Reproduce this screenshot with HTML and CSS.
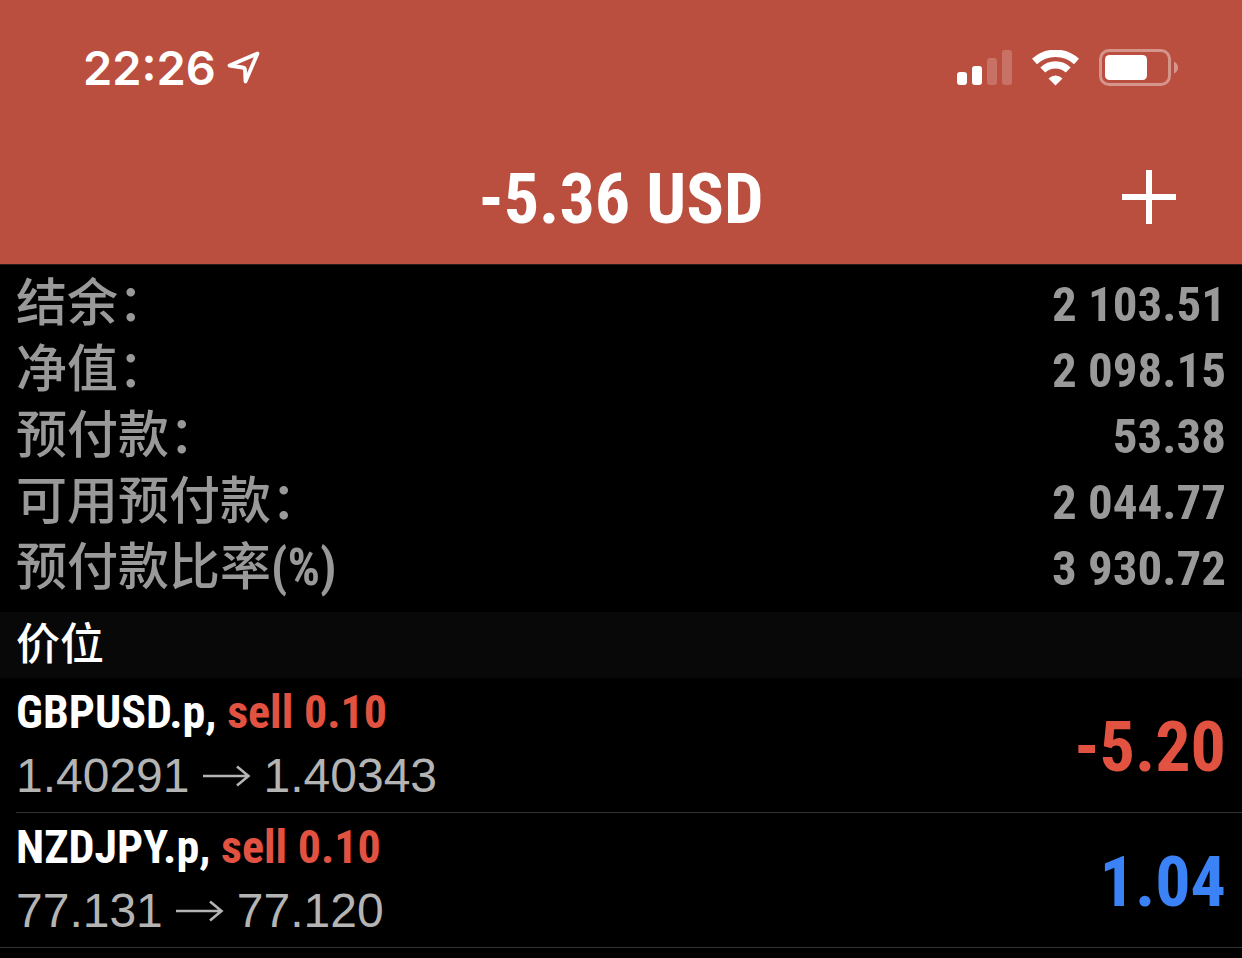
FILE: index.html
```html
<!DOCTYPE html>
<html lang="zh-CN">
<head>
<meta charset="utf-8">
<meta name="viewport" content="width=device-width, initial-scale=1">
<title>-5.36 USD</title>
<link rel="stylesheet" href="styles.css">
</head>
<body>
<header class="top">
  <div class="status">
    <div class="status-left">
      <span class="clock">22:26</span>
      <svg class="icon" width="36" height="36" viewBox="0 0 36 36" aria-hidden="true"><path d="M31.500 3.500L3.500 15.500L16.500 17.500Q19 17.800 19 20L19.500 31.500Z" fill="none" stroke="#fff" stroke-width="3.800" stroke-linejoin="round"/></svg>
    </div>
    <div class="status-right">
      <svg class="icon" width="56" height="36" viewBox="0 0 56 36" aria-hidden="true"><g fill="#fff"><rect x="0" y="22" width="10" height="13" rx="3"/><rect x="15" y="16" width="10" height="19" rx="3"/><g opacity=".2"><rect x="30" y="8" width="10" height="27" rx="3"/><rect x="45" y="0" width="10" height="35" rx="3"/></g></g></svg>
      <svg class="icon" width="48" height="36" viewBox="0 0 48 36" aria-hidden="true"><g fill="none" stroke="#fff"><path d="M2.500 11.500A31 31 0 0 1 44.500 11.500" stroke-width="7.400"/><path d="M10.800 20A18.500 18.500 0 0 1 36.200 20" stroke-width="7.200"/></g><path d="M23.500 35.500L16.500 28.500Q23.500 22.500 30.500 28.500Z" fill="#fff"/></svg>
      <svg class="icon" width="80" height="38" viewBox="0 0 80 38" aria-hidden="true"><rect x="1.500" y="1.500" width="69" height="34" rx="8.500" fill="none" stroke="#fff" stroke-opacity=".4" stroke-width="3"/><path d="M75 12.500Q79 14.500 79 18.500T75 24.500Z" fill="#fff" fill-opacity=".4"/><rect x="6" y="6" width="42" height="25" rx="4.500" fill="#fff"/></svg>
    </div>
  </div>
  <div class="titlebar">
    <h1 class="title">-5.36 USD</h1>
    <button class="add" type="button" aria-label="新订单"><svg class="icon" width="54" height="54" viewBox="0 0 54 54" aria-hidden="true"><path d="M27 0V54M0 27H54" stroke="#fff" stroke-width="6"/></svg></button>
  </div>
</header>
<main>
  <dl class="summary">
    <div class="line"><dt>结余：</dt><dd>2 103.51</dd></div>
    <div class="line"><dt>净值：</dt><dd>2 098.15</dd></div>
    <div class="line"><dt>预付款：</dt><dd>53.38</dd></div>
    <div class="line"><dt>可用预付款：</dt><dd>2 044.77</dd></div>
    <div class="line"><dt>预付款比率<span class="unit">(%)</span></dt><dd>3 930.72</dd></div>
  </dl>
  <h2 class="section">价位</h2>
  <ul class="positions">
    <li class="position">
      <div class="detail">
        <div class="name">GBPUSD.p, <span class="side">sell 0.10</span></div>
        <div class="prices"><span>1.40291</span><svg class="icon" width="48" height="24" viewBox="0 0 48 24" role="img" aria-label="至"><path d="M0 12H45M34 2.500L45.500 12L34 21.500" fill="none" stroke="currentColor" stroke-width="2.600"/></svg><span>1.40343</span></div>
      </div>
      <div class="profit loss">-5.20</div>
    </li>
    <li class="position">
      <div class="detail">
        <div class="name">NZDJPY.p, <span class="side">sell 0.10</span></div>
        <div class="prices"><span>77.131</span><svg class="icon" width="48" height="24" viewBox="0 0 48 24" role="img" aria-label="至"><path d="M0 12H45M34 2.500L45.500 12L34 21.500" fill="none" stroke="currentColor" stroke-width="2.600"/></svg><span>77.120</span></div>
      </div>
      <div class="profit gain">1.04</div>
    </li>
  </ul>
</main>
</body>
</html>
```
FILE: styles.css
```css
* { box-sizing: border-box; }
body {
  margin: 0;
  background: #000;
  color: #fff;
  font-family: "Roboto Condensed", "Noto Sans CJK SC", sans-serif;
  font-weight: 700;
}
h1, h2, dl, dd, ul { margin: 0; padding: 0; font-weight: inherit; }
ul { list-style: none; }
.icon { display: block; flex: none; }
.top { background: #bb4f3f; border-bottom: 1px solid #2a1a18; }
.status {
  display: flex;
  justify-content: space-between;
  align-items: center;
  height: 136px;
  padding: 0 63px 0 83px;
}
.status-left { display: flex; align-items: center; gap: 10px; }
.clock { font: 600 47px/56px Inter, sans-serif; }
.status-right { display: flex; align-items: center; gap: 19px; }
.titlebar {
  display: grid;
  grid-template-columns: 1fr auto 1fr;
  align-items: center;
  height: 128px;
  padding: 0 66px 6px;
}
.title { grid-column: 2; padding-top: 4px; font-size: 70px; line-height: 80px; }
.add {
  justify-self: end;
  padding: 0;
  border: 0;
  background: none;
}
.summary { padding: 4px 16px 13px; color: #999; }
.line {
  display: flex;
  justify-content: space-between;
  align-items: baseline;
  height: 66px;
  line-height: 70px;
}
.line dt { font-size: 51px; font-weight: 500; }
.line dd { font-size: 49px; }
.unit { font-weight: 700; }
.section {
  padding: 0 16px;
  background: #080808;
  font-size: 44px;
  font-weight: 500;
  line-height: 66px;
}
.position {
  display: flex;
  justify-content: space-between;
  align-items: center;
  margin-left: 16px;
  padding: 3px 16px 4px 0;
  border-bottom: 1px solid #333;
}
.position:last-child { margin-left: 0; padding-left: 16px; }
.name { font-size: 46px; line-height: 63px; }
.side { color: #e25241; }
.prices {
  display: flex;
  align-items: center;
  gap: 13px;
  color: #b4b4b4;
  font: 400 48px/64px "Liberation Sans", sans-serif;
}
.profit { padding-top: 4px; font-size: 70px; line-height: 80px; }
.loss { color: #e25241; }
.gain { color: #3b82f6; }
```
